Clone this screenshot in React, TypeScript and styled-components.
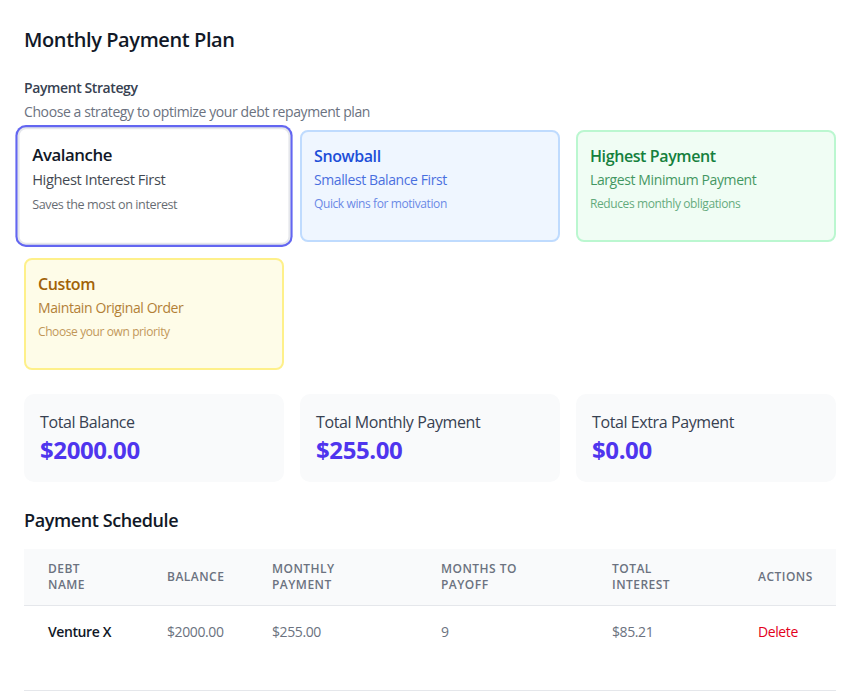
import React from "react";
import styled, { createGlobalStyle, css } from "styled-components";

const Global = createGlobalStyle`
  * { box-sizing: border-box; }
  html, body { margin: 0; padding: 0; background: #ffffff; }
  body {
    font-family: "Open Sans", "Noto Sans", sans-serif;
    color: #111827;
    letter-spacing: -0.025em;
  }
`;

const Page = styled.div`
  padding: 26px 24px 0 24px;
  width: 860px;
`;

const Title = styled.h1`
  margin: 0 0 24px 0;
  font-size: 20px;
  line-height: 28px;
  font-weight: 600;
  color: #111827;
`;

const Label = styled.div`
  font-size: 14px;
  line-height: 20px;
  font-weight: 600;
  color: #374151;
`;

const Hint = styled.p`
  margin: 4px 0 8px 0;
  font-size: 14px;
  line-height: 20px;
  color: #6b7280;
`;

const StrategyGrid = styled.div`
  display: grid;
  grid-template-columns: repeat(3, 260px);
  gap: 16px;
`;

type Tone = "gray" | "blue" | "green" | "yellow";

const tones: Record<Tone, { bg: string; border: string; text: string }> = {
  gray: { bg: "#ffffff", border: "#e5e7eb", text: "#111827" },
  blue: { bg: "#eff6ff", border: "#bfdbfe", text: "#1d4ed8" },
  green: { bg: "#f0fdf4", border: "#bbf7d0", text: "#15803d" },
  yellow: { bg: "#fefce8", border: "#fef08a", text: "#a16207" },
};

const StrategyCard = styled.button<{ $tone: Tone; $active?: boolean }>`
  display: flex;
  flex-direction: column;
  align-items: flex-start;
  text-align: left;
  height: 112px;
  padding: 12px 12px;
  border-radius: 8px;
  border: 2px solid ${(p) => tones[p.$tone].border};
  background: ${(p) => tones[p.$tone].bg};
  color: ${(p) => tones[p.$tone].text};
  font-family: inherit;
  letter-spacing: inherit;
  cursor: pointer;
  ${(p) =>
    p.$active &&
    css`
      transform: scale(1.05);
      box-shadow: 0 0 0 2px #6366f1;
    `}
`;

const CardTitle = styled.div`
  font-size: 16px;
  line-height: 24px;
  font-weight: 600;
`;

const CardSub = styled.div`
  margin-top: 2px;
  font-size: 14px;
  line-height: 20px;
  opacity: 0.8;
`;

const CardDesc = styled.div`
  margin-top: 6px;
  font-size: 12px;
  line-height: 16px;
  opacity: 0.65;
`;

const SummaryGrid = styled.div`
  display: grid;
  grid-template-columns: repeat(3, 260px);
  gap: 16px;
  margin-top: 24px;
`;

const SummaryCard = styled.div`
  background: #f9fafb;
  border-radius: 10px;
  padding: 16px;
  height: 88px;
`;

const SummaryLabel = styled.div`
  font-size: 16px;
  line-height: 24px;
  font-weight: 500;
  color: #374151;
`;

const SummaryValue = styled.div`
  font-size: 24px;
  line-height: 32px;
  font-weight: 700;
  color: #4f35ee;
`;

const SectionTitle = styled.h2`
  margin: 24px 0 15px 0;
  font-size: 18px;
  line-height: 28px;
  font-weight: 600;
  color: #111827;
`;

const Table = styled.table`
  width: 812px;
  border-collapse: collapse;
  table-layout: fixed;
  border-bottom: 1px solid #e5e7eb;
`;

const Th = styled.th`
  background: #f9fafb;
  padding: 12px 24px;
  text-align: left;
  font-size: 12px;
  line-height: 16px;
  font-weight: 600;
  letter-spacing: 0.04em;
  text-transform: uppercase;
  color: #6b7280;
  border-bottom: 1px solid #e5e7eb;
  vertical-align: middle;
`;

const Td = styled.td<{ $strong?: boolean }>`
  padding: 16px 24px 48px 24px;
  font-size: 14px;
  line-height: 20px;
  vertical-align: top;
  color: ${(p) => (p.$strong ? "#111827" : "#6b7280")};
  font-weight: ${(p) => (p.$strong ? 600 : 400)};
`;

const DeleteButton = styled.button`
  background: none;
  border: none;
  padding: 0;
  font-family: inherit;
  letter-spacing: inherit;
  font-size: 14px;
  line-height: 20px;
  color: #e3001b;
  cursor: pointer;
`;

const strategies: { tone: Tone; title: string; sub: string; desc: string; active?: boolean }[] = [
  { tone: "gray", title: "Avalanche", sub: "Highest Interest First", desc: "Saves the most on interest", active: true },
  { tone: "blue", title: "Snowball", sub: "Smallest Balance First", desc: "Quick wins for motivation" },
  { tone: "green", title: "Highest Payment", sub: "Largest Minimum Payment", desc: "Reduces monthly obligations" },
  { tone: "yellow", title: "Custom", sub: "Maintain Original Order", desc: "Choose your own priority" },
];

const summaries = [
  { label: "Total Balance", value: "$2000.00" },
  { label: "Total Monthly Payment", value: "$255.00" },
  { label: "Total Extra Payment", value: "$0.00" },
];

const colWidths = [119, 105, 169, 171, 146, 102];

export default function App() {
  return (
    <Page>
      <Global />
      <Title>Monthly Payment Plan</Title>
      <Label>Payment Strategy</Label>
      <Hint>Choose a strategy to optimize your debt repayment plan</Hint>
      <StrategyGrid>
        {strategies.map((s) => (
          <StrategyCard key={s.title} $tone={s.tone} $active={s.active}>
            <CardTitle>{s.title}</CardTitle>
            <CardSub>{s.sub}</CardSub>
            <CardDesc>{s.desc}</CardDesc>
          </StrategyCard>
        ))}
      </StrategyGrid>
      <SummaryGrid>
        {summaries.map((s) => (
          <SummaryCard key={s.label}>
            <SummaryLabel>{s.label}</SummaryLabel>
            <SummaryValue>{s.value}</SummaryValue>
          </SummaryCard>
        ))}
      </SummaryGrid>
      <SectionTitle>Payment Schedule</SectionTitle>
      <Table>
        <colgroup>
          {colWidths.map((w, i) => (
            <col key={i} style={{ width: w }} />
          ))}
        </colgroup>
        <thead>
          <tr>
            <Th>Debt Name</Th>
            <Th>Balance</Th>
            <Th>Monthly Payment</Th>
            <Th>Months to Payoff</Th>
            <Th>Total Interest</Th>
            <Th>Actions</Th>
          </tr>
        </thead>
        <tbody>
          <tr>
            <Td $strong>Venture X</Td>
            <Td>$2000.00</Td>
            <Td>$255.00</Td>
            <Td>9</Td>
            <Td>$85.21</Td>
            <Td>
              <DeleteButton>Delete</DeleteButton>
            </Td>
          </tr>
        </tbody>
      </Table>
    </Page>
  );
}
